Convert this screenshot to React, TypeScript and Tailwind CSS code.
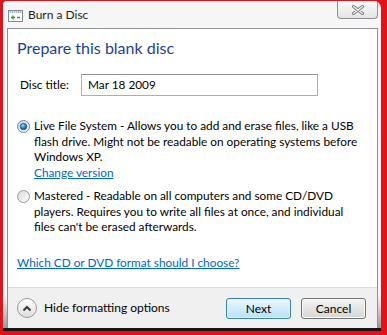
import React from 'react';

const font = { fontFamily: 'Lato, "Liberation Sans", sans-serif' };

function DiscIcon() {
  return (
    <svg width="15" height="12" viewBox="0 0 15 12">
      <rect x="0.5" y="0.5" width="14" height="11" fill="#ffffff" stroke="#7d8a96" />
      <rect x="1" y="1" width="13" height="2" fill="#d9e1ea" />
      <line x1="2" y1="2" x2="13" y2="2" stroke="#8896a4" strokeDasharray="1 1" />
      <path d="M3 7.5h4M5 5.5v4" stroke="#2f9a2f" strokeWidth="1.3" />
      <path d="M9 7.5h3" stroke="#2f9a2f" strokeWidth="1.3" />
    </svg>
  );
}

function CloseButton() {
  return (
    <div className="flex h-[18px] w-[41px] items-center justify-center rounded-b-[4px] border border-t-0 border-[#8d8f92] bg-gradient-to-b from-[#fbfbfb] to-[#e3e4e6]">
      <svg width="12" height="10" viewBox="0 0 12 10">
        <path d="M1.5 1.5l9 7M10.5 1.5l-9 7" stroke="#7a7c80" strokeWidth="3" strokeLinecap="round" />
        <path d="M1.5 1.5l9 7M10.5 1.5l-9 7" stroke="#f4f4f4" strokeWidth="1.2" strokeLinecap="round" />
      </svg>
    </div>
  );
}

function Radio({ checked }: { checked: boolean }) {
  return (
    <svg width="13" height="13" viewBox="0 0 13 13" className="shrink-0">
      <defs>
        <linearGradient id={checked ? 'rOn' : 'rOff'} x1="0" y1="0" x2="1" y2="1">
          <stop offset="0" stopColor="#d7d7d7" />
          <stop offset="1" stopColor="#ffffff" />
        </linearGradient>
        <radialGradient id="dot" cx="0.4" cy="0.35" r="0.7">
          <stop offset="0" stopColor="#a6dcfa" />
          <stop offset="0.5" stopColor="#2a8ad4" />
          <stop offset="1" stopColor="#0c4a86" />
        </radialGradient>
      </defs>
      <circle cx="6.5" cy="6.5" r="6" fill={checked ? 'url(#rOn)' : 'url(#rOff)'} stroke={checked ? '#5f83a6' : '#9a9a9a'} />
      {checked && <circle cx="6.5" cy="6.5" r="3.3" fill="url(#dot)" stroke="#1d4f80" strokeWidth="0.7" />}
    </svg>
  );
}

function Link({ children }: { children: React.ReactNode }) {
  return <span className="text-[#0066cc] underline underline-offset-[1px]">{children}</span>;
}

export default function App() {
  return (
    <div className="flex h-[335px] w-[387px] bg-[#e3121a] pb-[4px] pl-[3px] pr-[6px] pt-[1px]" style={font}>
      <div className="flex flex-1 flex-col overflow-hidden rounded-tl-[4px] rounded-tr-[7px] border-b-[3px] border-[#151515] bg-gradient-to-b from-[#f6f6f6] from-[90%] to-[#9a9a9a]">
        {/* title bar */}
        <div className="flex h-[27px] items-start">
          <div className="ml-[5px] mt-[9px]">
            <DiscIcon />
          </div>
          <span className="ml-[5px] mt-[6px] text-[12px] leading-[16px] text-[#1e1e1e]">Burn a Disc</span>
          <div className="ml-auto mr-[3px]">
            <CloseButton />
          </div>
        </div>

        {/* content */}
        <div className="ml-[4px] mr-[3px] flex flex-1 flex-col border-x border-t border-[#8f9295] bg-white">
          <div className="flex flex-1 flex-col pl-[9px] pt-[9px] text-[11.8px] text-black">
            <h1 className="text-[16px] leading-[20px] text-[#1c3f94]">Prepare this blank disc</h1>

            <div className="mt-[16px] flex items-center">
              <span className="ml-[3px] w-[61px]">Disc title:</span>
              <div className="flex h-[22px] w-[237px] items-center border border-[#abadb3] border-t-[#8e9095] pl-[6px]">
                Mar 18 2009
              </div>
            </div>

            <div className="mt-[22px] flex leading-[15.5px]">
              <div className="mt-[2px] w-[16px]">
                <Radio checked />
              </div>
              <div className="ml-[1px]">
                <div>Live File System - Allows you to add and erase files, like a USB</div>
                <div>flash drive. Might not be readable on operating systems before</div>
                <div>Windows XP.</div>
                <div>
                  <Link>Change version</Link>
                </div>
              </div>
            </div>

            <div className="mt-[8px] flex leading-[15.5px]">
              <div className="mt-[2px] w-[16px]">
                <Radio checked={false} />
              </div>
              <div className="ml-[1px]">
                <div>Mastered - Readable on all computers and some CD/DVD</div>
                <div>players. Requires you to write all files at once, and individual</div>
                <div>files can't be erased afterwards.</div>
              </div>
            </div>

            <div className="mt-[20px] leading-[15.5px]">
              <Link>Which CD or DVD format should I choose?</Link>
            </div>
          </div>

          {/* footer */}
          <div className="flex h-[41px] items-start border-t border-[#dcdcdc] bg-[#f0f0f0] pl-[9px] pr-[11px] pt-[10px] text-[12px]">
            <div className="flex items-center">
              <div className="flex h-[20px] w-[20px] items-center justify-center rounded-full border border-[#9b9b9b] bg-gradient-to-b from-white to-[#dedede]">
                <svg width="10" height="7" viewBox="0 0 10 7">
                  <path d="M1.5 5.5L5 2l3.5 3.5" fill="none" stroke="#3a3a3a" strokeWidth="2" />
                </svg>
              </div>
              <span className="ml-[7px] leading-[20px] text-black">Hide formatting options</span>
            </div>
            <div className="ml-auto flex gap-[10px]">
              <div className="flex h-[21px] w-[65px] items-center justify-center rounded-[3px] border border-[#3c7fb1] bg-gradient-to-b from-[#edf8fe] to-[#b8e0f8] text-black shadow-[inset_0_0_0_1px_#dff3fd]">
                Next
              </div>
              <div className="flex h-[21px] w-[65px] items-center justify-center rounded-[3px] border border-[#707070] bg-gradient-to-b from-[#f3f3f3] to-[#d6d6d6] text-black shadow-[inset_0_0_0_1px_#fbfbfb]">
                Cancel
              </div>
            </div>
          </div>
        </div>
      </div>
    </div>
  );
}
